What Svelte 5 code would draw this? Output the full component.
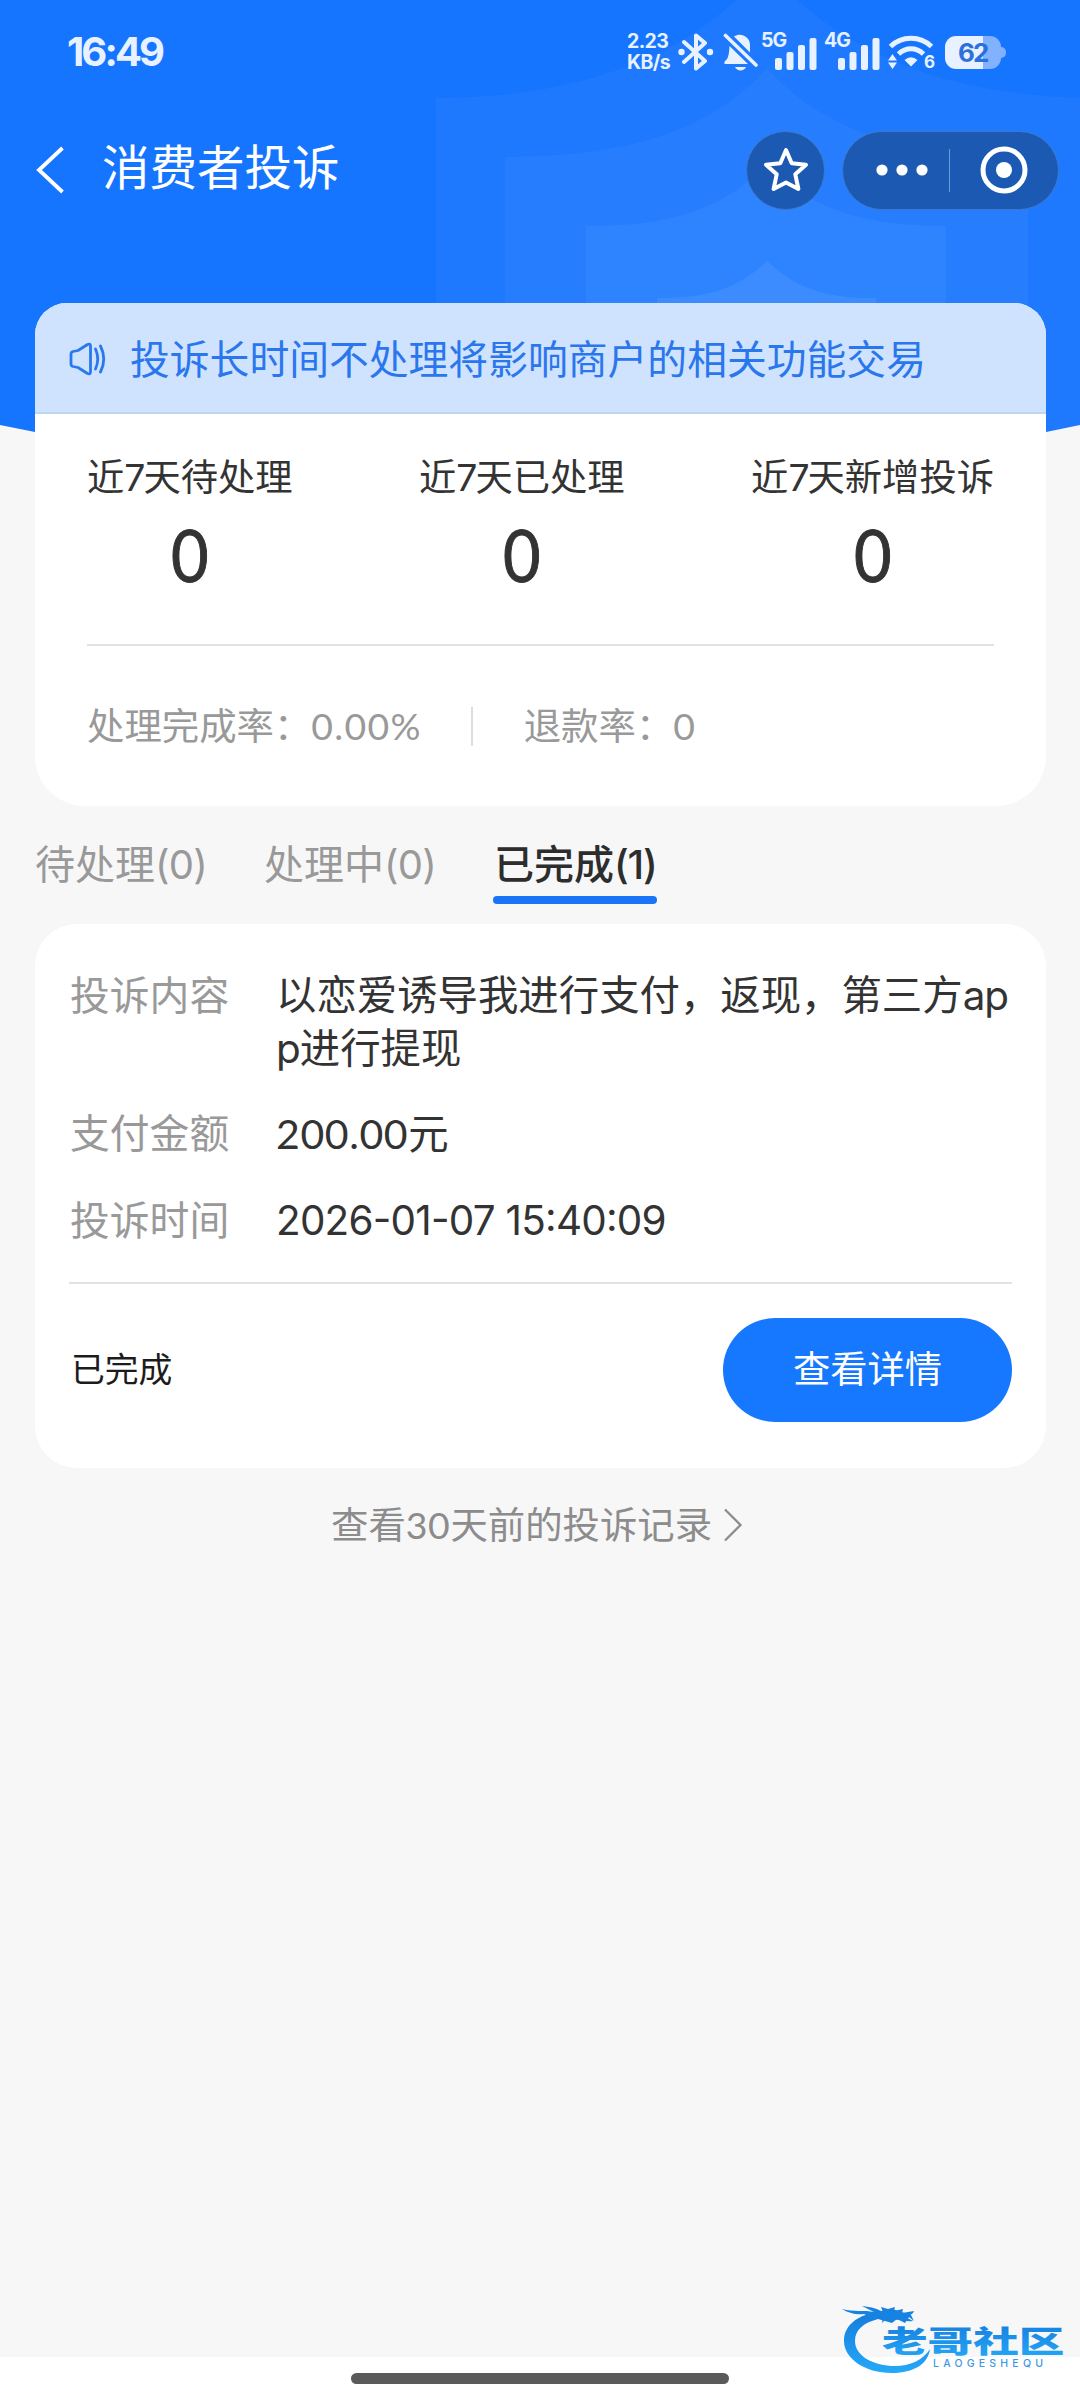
<script>
  const stats = [
    { label: ['近', '7', '天待处理'], value: 0 },
    { label: ['近', '7', '天已处理'], value: 0 },
    { label: ['近', '7', '天新增投诉'], value: 0 },
  ];
  const tabs = [
    { label: '待处理', count: 0 },
    { label: '处理中', count: 0 },
    { label: '已完成', count: 1, active: true },
  ];
</script>

<div class="page" lang="zh-CN">
  <svg class="backdrop" viewBox="0 0 1080 500" aria-hidden="true">
    <defs>
      <clipPath id="arc"><path d="M0 0H1080V425Q540 540 0 425Z" /></clipPath>
    </defs>
    <g clip-path="url(#arc)">
      <rect width="1080" height="500" fill="#1675ff" />
      <g fill="#fff">
        <path opacity=".035" d="M436 98C590 98 700 50 767 -32C834 50 944 98 1098 98V500H436Z" />
        <path opacity=".04" d="M505 157C630 157 712 130 767 68C822 130 904 157 1028 157V500H505Z" />
        <path opacity=".04" d="M586 226C672 226 722 209 767 165C812 209 862 226 946 226V500H586Z" />
        <path opacity=".075" d="M657 298C705 298 735 291 767 261C799 291 829 298 876 298V500H657Z" />
      </g>
    </g>
  </svg>

  <div class="status">
    <span class="time">16:49</span>
    <div class="signals">
      <div class="speed"><span>2.23</span><span>KB/s</span></div>
      <svg class="bt" viewBox="0 0 36 38">
        <path d="M6 9L27 28L18 35.500V2.500L27 10L6 29" fill="none" stroke="currentColor" stroke-width="4" stroke-linejoin="round" stroke-linecap="round" />
        <circle cx="3.500" cy="19" r="3.200" fill="currentColor" /><circle cx="32" cy="19" r="3.200" fill="currentColor" />
      </svg>
      <svg class="bell" viewBox="0 0 36 38">
        <path d="M11 3.500C18 -1 27 4 27 12V19.500L11 3.500ZM6.500 13L25 31H1.500V28.500C5 26 6 23 6.500 13Z" fill="currentColor" />
        <path d="M12 34H23C21 38.500 14 38.500 12 34Z" fill="currentColor" />
        <path d="M2.500 2.500L33 32" stroke="currentColor" stroke-width="3.600" stroke-linecap="round" />
      </svg>
      {#each ['5G', '4G'] as net}
        <div class="cell">
          <span>{net}</span>
          <svg viewBox="0 0 42 33">
            <g fill="currentColor">
              <rect x="0" y="21" width="7" height="12" rx="2" /><rect x="11.500" y="15" width="7" height="18" rx="2" />
              <rect x="23" y="8" width="7" height="25" rx="2" /><rect x="34.500" y="1" width="7" height="32" rx="2" />
            </g>
          </svg>
        </div>
      {/each}
      <div class="wifi">
        <svg viewBox="0 0 46 34">
          <g fill="none" stroke="currentColor" stroke-width="5">
            <path d="M2.500 11.500C14 .5 32 .5 43.500 11.500" /><path d="M10.500 19C18 12 28 12 35.500 19" />
          </g>
          <path d="M16.500 25Q23 19.500 29.500 25L23 31.500ZM0 25.500L4.500 19L9 25.500ZM0 27.500L4.500 34L9 27.500Z" fill="currentColor" />
        </svg>
        <span>6</span>
      </div>
      <div class="battery"><span>62</span></div>
    </div>
  </div>

  <header>
    <svg class="back" viewBox="0 0 30 48"><path d="M26.500 2L3 24L26.500 46" fill="none" stroke="#fff" stroke-width="3.800" /></svg>
    <h1>消费者投诉</h1>
    <div class="round">
      <svg viewBox="0 0 46 46"><path d="M23 3L28.700 16.300L43 17.700L32.300 27.300L35.400 42L23 35.400L10.600 42L13.700 27.300L3 17.700L17.300 16.300Z" fill="none" stroke="#fff" stroke-width="4" stroke-linejoin="round" /></svg>
    </div>
    <div class="capsule">
      <svg class="dots" viewBox="0 0 52 12"><g fill="#fff"><circle cx="6" cy="6" r="5.600" /><circle cx="26" cy="6" r="5.600" /><circle cx="46" cy="6" r="5.600" /></g></svg>
      <i></i>
      <svg class="target" viewBox="0 0 48 48"><circle cx="24" cy="24" r="21" fill="none" stroke="#fff" stroke-width="5" /><circle cx="24" cy="24" r="8" fill="#fff" /></svg>
    </div>
  </header>

  <section class="card summary">
    <div class="notice">
      <svg viewBox="0 0 38 34">
        <g fill="none" stroke="#2a78f0" stroke-width="2.800" stroke-linejoin="round" stroke-linecap="round">
          <path d="M2 12Q2 10 4 9.500L9 8.500L18.500 2.500Q21.500 1.500 21.500 4V30Q21.500 32.500 18.500 31.500L9 25.500L4 24.500Q2 24 2 22Z" />
          <path d="M26.500 7Q31 17 26.500 27M31.500 4Q38 17 31.500 30" />
        </g>
      </svg>
      <span>投诉长时间不处理将影响商户的相关功能交易</span>
    </div>
    <div class="stats">
      {#each stats as s}
        <div class="stat">
          <span class="name">{s.label[0]}<span class="seven">{s.label[1]}</span>{s.label[2]}</span>
          <b>{s.value}</b>
        </div>
      {/each}
    </div>
    <div class="rates">
      <span>处理完成率：<span class="num">0.00%</span></span>
      <i></i>
      <span>退款率：<span class="num">0</span></span>
    </div>
  </section>

  <nav>
    {#each tabs as t}
      <span class="tab" class:active={t.active}>{t.label}<span class="count">({t.count})</span></span>
    {/each}
  </nav>

  <section class="card record">
    <dl>
      <dt>投诉内容</dt>
      <dd>以恋爱诱导我进行支付，返现，第三方<span class="latin">ap</span><br /><span class="latin">p</span>进行提现</dd>
      <dt>支付金额</dt>
      <dd><span class="num">200.00</span>元</dd>
      <dt>投诉时间</dt>
      <dd class="date">2026-01-07 15:40:09</dd>
    </dl>
    <div class="foot">
      <span>已完成</span>
      <button>查看详情</button>
    </div>
  </section>

  <div class="more">
    <span>查看<span class="num">30</span>天前的投诉记录</span>
    <svg viewBox="0 0 20 34"><path d="M2 1.500L17.500 17L2 32.500" fill="none" stroke="#8c8c8c" stroke-width="2.300" /></svg>
  </div>

  <div class="navbar"><i></i></div>

  <svg class="mark" viewBox="0 0 240 80">
    <defs>
      <linearGradient id="ink" x1="0" y1="0" x2="0" y2="1"><stop offset="0" stop-color="#1479dc" /><stop offset="1" stop-color="#25a9f8" /></linearGradient>
    </defs>
    <path fill="url(#ink)" d="M36 14C16 18 4 28 4 43C4 60 24 75 52 75C74 75 88 66 90 51C83 62 70 68 55 68C34 68 15 58 15 43C15 32 23 25 38 21L52 25L57 21L65 25L69 19L74 23L71 17L52 11Z" />
    <path fill="#1682e2" d="M2 11C14 14 24 12 34 14L22 8C32 9 38 11 43 14L41 9L48 11L55 9L54 13L63 11L62 15L74 13C73 17 68 18 64 18L73 23C66 24 60 21 55 22L47 20L42 25L43 19L34 21L24 16C16 17 8 15 2 11Z" />
    <text class="brand" transform="translate(42 54) scale(1.520 1)" x="0" y="0" fill="url(#ink)">老哥社区</text>
    <text class="latinbrand" x="93" y="69" textLength="110">LAOGESHEQU</text>
  </svg>
</div>

<style>
  :global(body) { background: #f7f7f7; }
  * { box-sizing: border-box; }
  .page {
    position: relative;
    width: 1080px;
    height: 2400px;
    display: flex;
    flex-direction: column;
    overflow: hidden;
    background: #f7f7f7;
    color: #333;
    font-family: Inter, 'Noto Sans CJK SC', sans-serif;
    font-size: 40.4px;
    white-space: nowrap;
  }
  svg { display: block; flex: none; }
  .backdrop { position: absolute; top: 0; left: 0; width: 1080px; height: 500px; }
  .status, header, .card, nav, .more { position: relative; }

  .status { height: 104px; padding: 0 79px 0 67px; display: flex; align-items: center; color: #e8f1ff; }
  .time { font-weight: 650; font-size: 40px; line-height: 104px; letter-spacing: -2.900px; }
  .signals { margin-left: auto; display: flex; align-items: center; }
  .speed { width: 43px; display: flex; flex-direction: column; font-weight: 700; font-size: 19.500px; line-height: 21px; letter-spacing: -.6px; }
  .bt { width: 36px; height: 38px; margin-left: 8px; }
  .bell { width: 36px; height: 38px; margin: 0 -2px 0 9px; }
  .cell { position: relative; width: 56px; height: 38px; margin: 0 3px 0 4px; display: flex; align-items: flex-end; justify-content: flex-end; }
  .cell span { position: absolute; left: 0; top: -1px; font-weight: 700; font-size: 19.500px; line-height: 17px; letter-spacing: -1px; }
  .cell svg { width: 42px; height: 33px; margin-bottom: 1px; }
  .wifi { position: relative; width: 46px; height: 34px; margin-left: 5px; }
  .wifi svg { width: 46px; height: 34px; }
  .wifi span { position: absolute; right: -1px; bottom: -3px; font-weight: 700; font-size: 17px; line-height: 20px; }
  .battery { position: relative; margin-left: 11px; width: 56px; height: 33px; border-radius: 11px; background: linear-gradient(90deg, #e8f1ff 0 38px, #82b2ff 38px); padding-left: 13px; }
  .battery::after { content: ''; position: absolute; right: -5px; top: 11px; width: 5px; height: 11px; border-radius: 0 5px 5px 0; background: #82b2ff; }
  .battery span { font-weight: 700; font-size: 26px; line-height: 33px; letter-spacing: -2px; color: #2b70dc; display: block; }

  header { height: 132px; padding: 0 21px 0 36px; display: flex; align-items: center; }
  .back { width: 30px; height: 48px; }
  h1 { margin: 0 auto 0 36px; font-weight: 400; font-size: 47.500px; line-height: 66px; color: #fff; padding-bottom: 5px; }
  .round, .capsule { height: 79px; border-radius: 40px; background: #1b59b2; border: 1px solid #3b79cc; display: flex; align-items: center; }
  .round { width: 79px; justify-content: center; }
  .round svg { width: 46px; height: 46px; }
  .capsule { width: 217px; margin-left: 17px; padding-left: 33px; }
  .dots { width: 52px; height: 12px; }
  .capsule i { width: 1px; height: 43px; background: #6c9bd9; margin: 0 30px 0 21px; }
  .target { width: 48px; height: 48px; }

  .card { background: #fff; margin: 0 34px 0 35px; }
  .summary { margin-top: 67px; height: 503px; border-radius: 32px 32px 50px 50px; }
  .notice { height: 111px; border-radius: 32px 32px 0 0; padding-left: 34px; background: #cfe3ff; border-bottom: 2px solid #bfd6f3; display: flex; align-items: center; color: #2a76ec; font-size: 39.800px; }
  .notice svg { width: 38px; height: 34px; margin-top: 2px; }
  .notice span { margin-left: 23px; line-height: 60px; padding-top: 4px; }
  .stats { margin: 0 52px; height: 232px; padding-top: 36px; display: flex; justify-content: space-between; border-bottom: 2px solid #e2e2e2; }
  .stat { display: flex; flex-direction: column; align-items: center; }
  .name { font-size: 37.300px; line-height: 56px; }
  .seven { letter-spacing: -2px; }
  .stat b { font: 400 72px/96px Lato, sans-serif; -webkit-text-stroke: 1px #333; transform: scaleX(.9); }
  .rates { height: 160px; padding: 1px 52px 0; display: flex; align-items: center; font-size: 37.400px; line-height: 56px; color: #999; }
  .rates i { width: 2px; height: 39px; margin: 0 51px 0 49px; background: #ddd; }
  .num { font-family: Lato, 'Noto Sans CJK SC', sans-serif; letter-spacing: .6px; }
  .rates .num { letter-spacing: 1.300px; }

  nav { height: 118px; padding: 27px 0 0 35px; display: flex; }
  .tab { height: 71px; line-height: 64px; font-size: 40px; color: #999; margin-right: 57px; }
  .count { letter-spacing: -.8px; }
  .tab.active { color: #2d2d2d; font-weight: 500; padding: 0 1px; display: flex; flex-direction: row; background: linear-gradient(#1a74f8, #1a74f8) 0 100% / 100% 0 no-repeat; position: relative; }
  .tab.active::after { content: ''; position: absolute; left: 0; right: 0; bottom: 0; height: 8px; border-radius: 4px; background: #1a74f8; }
  .active .count { letter-spacing: -1.300px; }

  .record { height: 544px; border-radius: 42px; padding: 46px 34px 0; }
  dl { margin: 0; display: grid; grid-template-columns: 207px 1fr; row-gap: 33px; line-height: 52.500px; }
  dt { color: #999; font-size: 39.800px; padding-left: 1px; }
  dd { margin: 0; }
  dd .num { font-size: 41px; letter-spacing: .6px; }
  .latin { letter-spacing: -1px; }
  .date { letter-spacing: -.75px; font-feature-settings: 'case'; }
  .foot { margin-top: 35px; border-top: 2px solid #e2e2e2; padding: 34px 0 0 2px; display: flex; justify-content: space-between; align-items: center; }
  .foot span { font-size: 33.800px; color: #1c1c1c; line-height: 50px; }
  button { width: 289px; height: 104px; border: 0; border-radius: 52px; padding: 0; background: #1677ff; color: #fff; font: 400 37.300px/104px Inter, 'Noto Sans CJK SC', sans-serif; }

  .more { margin-top: 27px; height: 60px; padding-left: 331px; display: flex; align-items: center; font-size: 37.400px; line-height: 60px; color: #8c8c8c; }
  .more svg { width: 20px; height: 34px; margin-left: 11px; }

  .navbar { margin-top: auto; height: 43px; background: #fff; display: flex; justify-content: center; padding-top: 16px; }
  .navbar i { width: 378px; height: 11px; border-radius: 6px; background: #5a5a5a; }

  .mark { position: absolute; left: 840px; top: 2298px; width: 240px; height: 80px; }
  .brand { font-family: 'Noto Sans CJK SC', sans-serif; font-weight: 900; font-size: 30px; }
  .latinbrand { font-family: Inter, sans-serif; font-weight: 500; font-size: 10.500px; fill: #3c97e6; }
</style>
